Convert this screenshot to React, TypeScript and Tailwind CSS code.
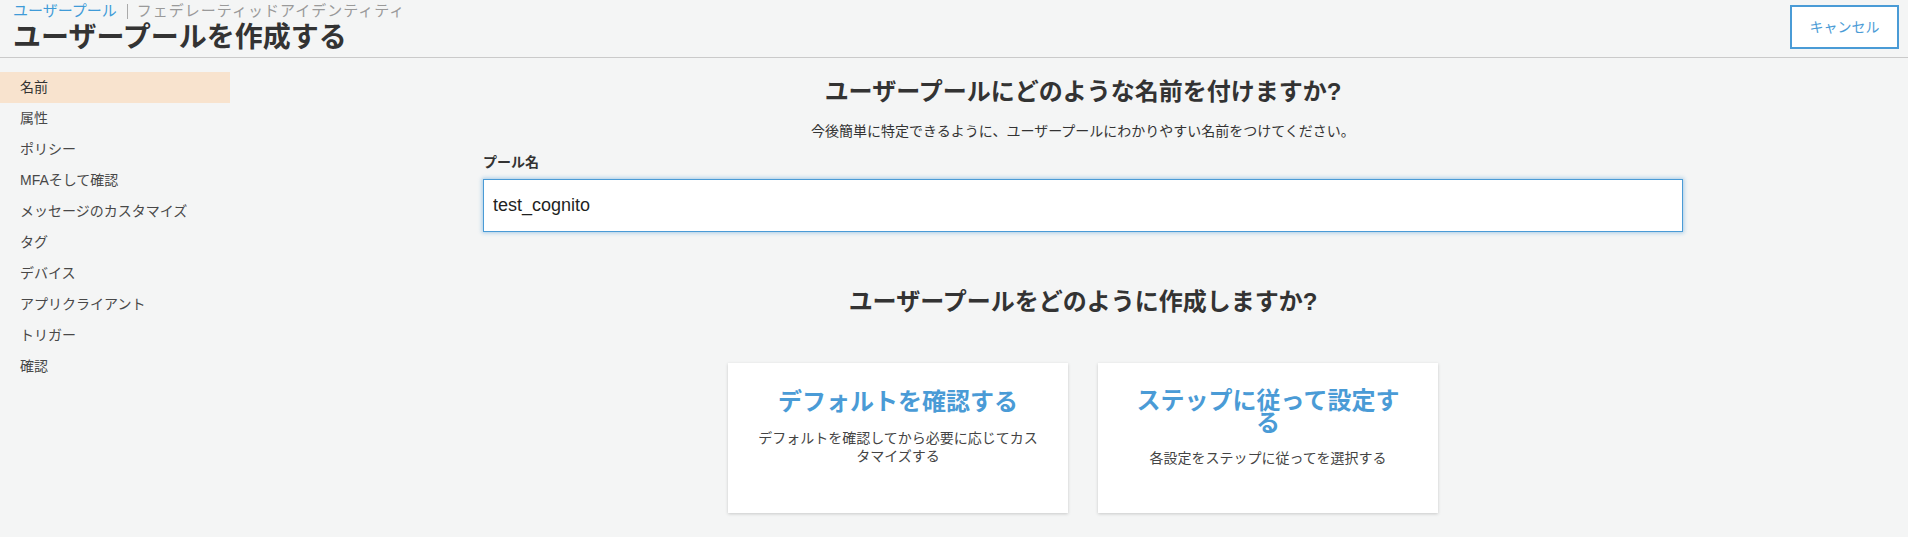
import React from "react";

const items = [
  "名前",
  "属性",
  "ポリシー",
  "MFAそして確認",
  "メッセージのカスタマイズ",
  "タグ",
  "デバイス",
  "アプリクライアント",
  "トリガー",
  "確認",
];

export default function App() {
  return (
    <div className="min-h-[537px] bg-[#f4f5f5] text-[#333] font-[family-name:'Liberation_Sans','Noto_Sans_CJK_JP',sans-serif]">
      <header className="h-[58px] border-b border-[#cacaca] flex justify-between">
        <div className="pl-[13px]">
          <div className="flex items-center h-[22px] text-[15px] leading-[22px]">
            <span className="text-[#3f9bd8]">ユーザープール</span>
            <span className="ml-[10px] mr-[9px] h-[15px] border-l border-[#aaa]" />
            <span className="text-[#9a9a9a] tracking-[1px]">フェデレーティッドアイデンティティ</span>
          </div>
          <h1 className="text-[28px] leading-[32px] font-bold text-[#333]">ユーザープールを作成する</h1>
        </div>
        <button className="mt-[5px] mr-[9px] w-[109px] h-[44px] border-2 border-[#4a9bd6] bg-white text-[14px] text-[#4a9bd6]">
          キャンセル
        </button>
      </header>

      <div className="flex">
        <nav className="w-[258px] shrink-0 pt-[14px]">
          {items.map((t, i) => (
            <div
              key={t}
              className={
                i === 0
                  ? "w-[230px] h-[31px] flex items-center pl-[20px] text-[14px] text-[#333] bg-[#f8e3ce]"
                  : "w-[230px] h-[31px] flex items-center pl-[20px] text-[14px] text-[#484848]"
              }
            >
              {t}
            </div>
          ))}
        </nav>

        <main className="flex-1 flex flex-col items-center pt-[22px]">
          <div className="w-[1200px] flex flex-col">
            <h2 className="text-[24px] leading-[24px] font-bold text-center text-[#333]">
              ユーザープールにどのような名前を付けますか?
            </h2>
            <p className="mt-[18px] text-[14px] leading-[18px] text-center text-[#333]">
              今後簡単に特定できるように、ユーザープールにわかりやすい名前をつけてください。
            </p>
            <label className="mt-[13px] text-[14px] leading-[18px] font-bold text-[#333]">プール名</label>
            <input
              readOnly
              defaultValue="test_cognito"
              className="mt-[8px] h-[53px] w-[1200px] bg-white border border-[#4a9bd6] shadow-[0_0_4px_1px_rgba(74,155,214,0.45)] pl-[9px] text-[18px] text-[#1f1f1f] outline-none font-[family-name:'Liberation_Sans',sans-serif]"
            />
            <h2 className="mt-[58px] text-[24px] leading-[24px] font-bold text-center text-[#333]">
              ユーザープールをどのように作成しますか?
            </h2>
            <div className="mt-[49px] flex justify-center gap-[30px]">
              <div className="w-[340px] h-[150px] bg-white shadow-[0_1px_3px_rgba(0,0,0,0.18)] px-[30px] pt-[27px] text-center">
                <div className="text-[24px] leading-[24px] font-bold text-[#4a9bd6]">デフォルトを確認する</div>
                <div className="mt-[15px] text-[14px] leading-[18px] text-[#444]">
                  デフォルトを確認してから必要に応じてカスタマイズする
                </div>
              </div>
              <div className="w-[340px] h-[150px] bg-white shadow-[0_1px_3px_rgba(0,0,0,0.18)] px-[30px] pt-[27px] text-center">
                <div className="text-[24px] leading-[22px] font-bold text-[#4a9bd6]">ステップに従って設定する</div>
                <div className="mt-[15px] text-[14px] leading-[18px] text-[#444]">
                  各設定をステップに従ってを選択する
                </div>
              </div>
            </div>
          </div>
        </main>
      </div>
    </div>
  );
}
